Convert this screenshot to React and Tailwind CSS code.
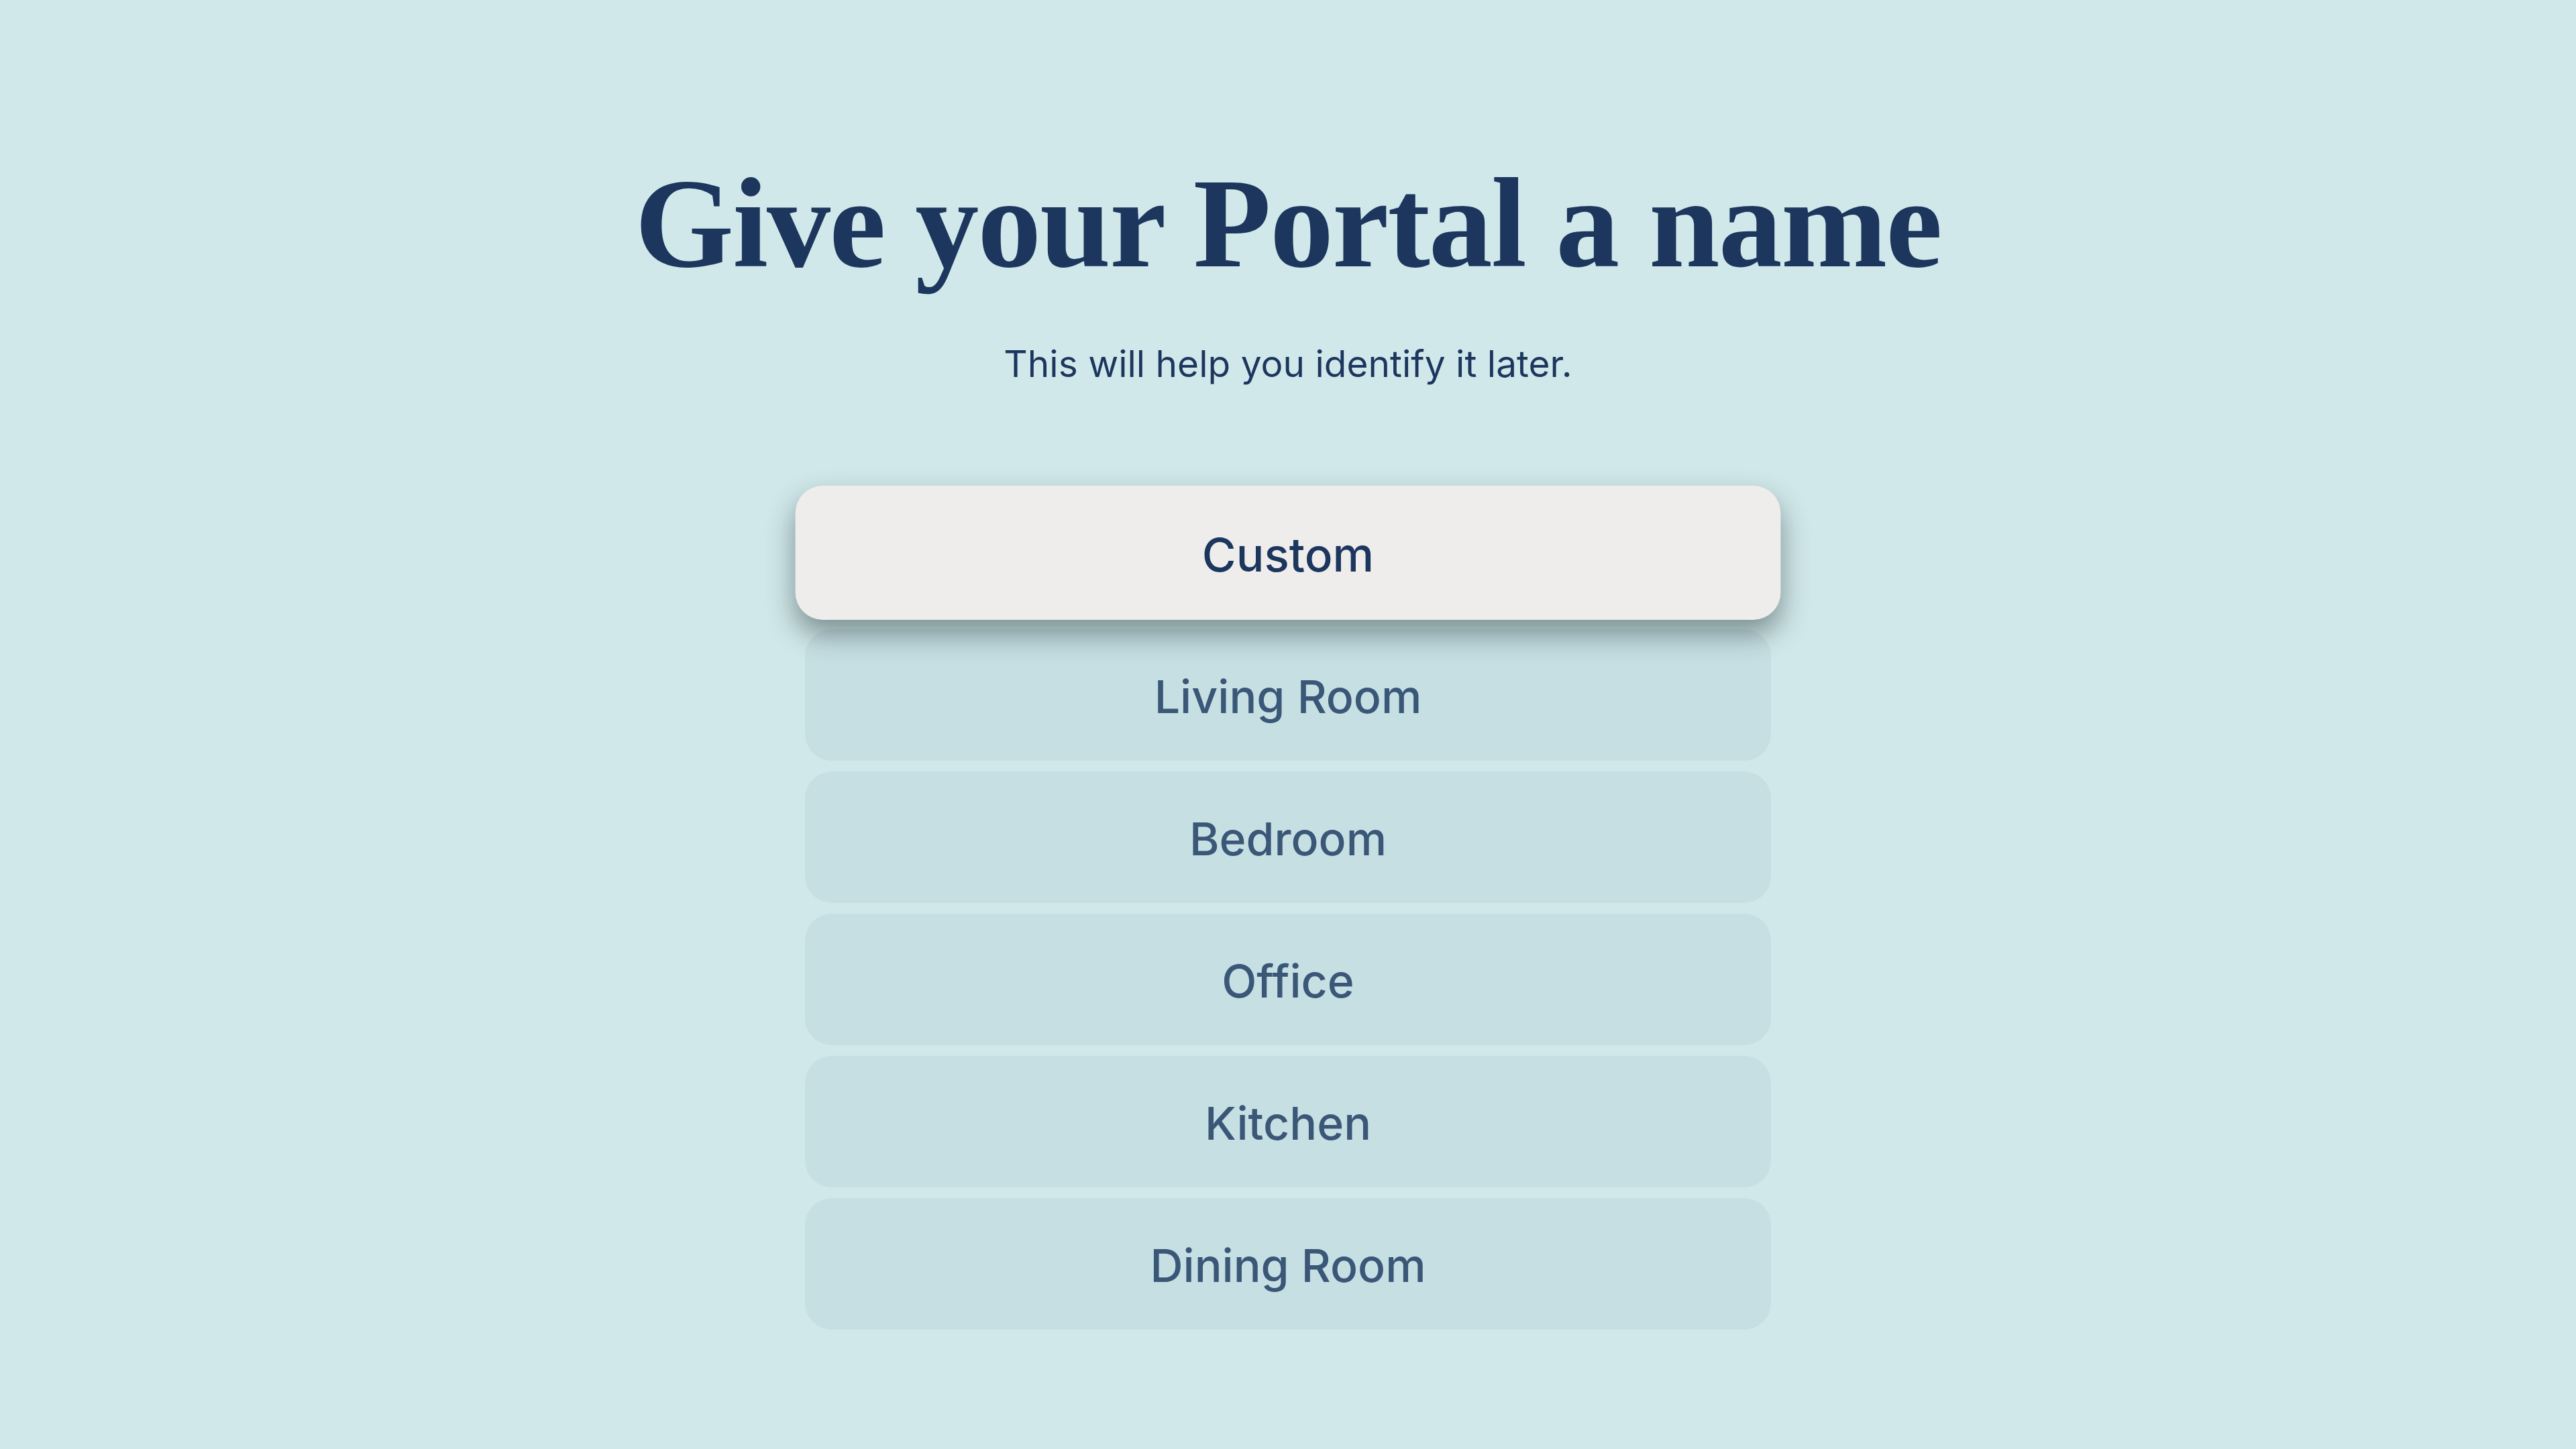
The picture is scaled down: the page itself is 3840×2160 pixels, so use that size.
import React from 'react';

const rooms = ['Living Room', 'Bedroom', 'Office', 'Kitchen', 'Dining Room'];

const NameOption = ({ label, selected }) => (
  <button
    className={
      selected
        ? "relative z-10 flex h-[196px] w-[1440px] scale-[1.02] items-center justify-center rounded-[40px] bg-[#eeedeb] pt-[4px] font-['Inter','Noto_Sans',sans-serif] text-[68px] font-medium text-[#1c365e] shadow-[0_20px_40px_rgba(20,40,40,0.45)]"
        : "flex h-[196px] w-[1440px] items-center justify-center rounded-[40px] bg-[#c6dfe3] pt-[4px] font-['Inter','Noto_Sans',sans-serif] text-[68px] font-medium text-[#3b5778]"
    }
  >
    {label}
  </button>
);

const App = () => {
  return (
    <div className="flex min-h-screen flex-col items-center bg-[#d1e8ea] pt-[238px]">
      <h1 className="font-['Liberation_Serif',serif] text-[190px] font-bold leading-none tracking-[-0.01em] text-[#1c365e]">
        Give your Portal a name
      </h1>
      <p className="mt-[81px] font-['Inter','Noto_Sans',sans-serif] text-[55px] leading-[1.2] text-[#1c365e]">
        This will help you identify it later.
      </p>

      <div className="mt-[151px] flex flex-col gap-[16px]">
        <NameOption label="Custom" selected />
        {rooms.map((room) => (
          <NameOption key={room} label={room} />
        ))}
      </div>
    </div>
  );
};

export default App;
